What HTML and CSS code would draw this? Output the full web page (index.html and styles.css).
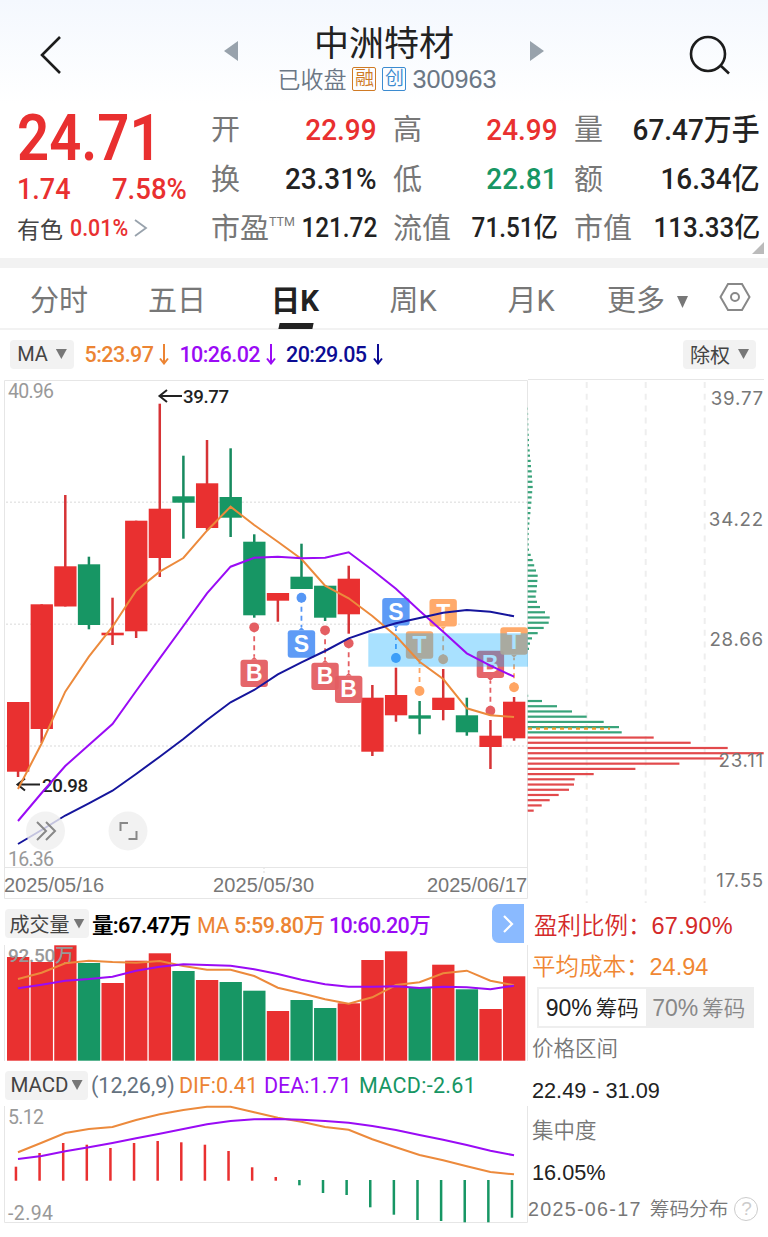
FILE: index.html
```
<!DOCTYPE html>
<html lang="zh-CN">
<head>
    <meta charset="UTF-8">
    <meta name="viewport" content="width=device-width, initial-scale=1.0">
    <title>中洲特材 300963</title>
    <link rel="stylesheet" href="styles.css">
</head>
<body>
    <!-- 顶部标题 -->
    <header class="header">
        <svg class="back" width="24" height="40" viewBox="0 0 24 40"><path d="M21 2 L3 20 L21 38"/></svg>
        <span class="arrow prev"></span>
        <div class="title">
            <h1>中洲特材</h1>
            <div class="subtitle">
                <span>已收盘</span>
                <span class="tag tag-rong">融</span>
                <span class="tag tag-chuang">创</span>
                <span class="code">300963</span>
            </div>
        </div>
        <span class="arrow next"></span>
        <svg class="search" width="44" height="44" viewBox="0 0 44 44"><circle cx="20" cy="20" r="17"/><path d="M32 31 L41 39.500"/></svg>
    </header>

    <!-- 行情数据 -->
    <section class="quote">
        <div class="price">
            <div class="last"><span class="num">24.71</span></div>
            <div class="change"><span class="num">1.74</span><span class="num">7.58%</span></div>
            <div class="sector">有色<span class="num red">0.01%</span><svg width="14" height="18" viewBox="0 0 14 18"><path d="M1 1 L12 9 L1 17"/></svg></div>
        </div>
        <div class="stats">
            <div class="stat"><label>开</label><b class="num red">22.99</b></div>
            <div class="stat"><label>高</label><b class="num red">24.99</b></div>
            <div class="stat"><label>量</label><b class="num">67.47<i>万手</i></b></div>
            <div class="stat"><label>换</label><b class="num">23.31%</b></div>
            <div class="stat"><label>低</label><b class="num green">22.81</b></div>
            <div class="stat"><label>额</label><b class="num">16.34<i>亿</i></b></div>
            <div class="stat small"><label>市盈<sup>TTM</sup></label><b class="num">121.72</b></div>
            <div class="stat small"><label>流值</label><b class="num">71.51<i>亿</i></b></div>
            <div class="stat small"><label>市值</label><b class="num">113.33<i>亿</i></b></div>
        </div>
        <span class="corner"></span>
    </section>

    <!-- 周期切换 -->
    <nav class="tabs">
        <a class="tab">分时</a>
        <a class="tab">五日</a>
        <a class="tab active">日K</a>
        <a class="tab">周K</a>
        <a class="tab">月K</a>
        <a class="tab more">更多<span class="caret"></span></a>
        <svg class="setting" width="32" height="30" viewBox="0 0 32 30"><path d="M9 2 H23 L30.500 15 L23 28 H9 L1.500 15 Z"/><circle cx="16" cy="15" r="4"/></svg>
    </nav>

    <!-- 均线 -->
    <div class="legend ma-legend">
        <span class="pill ma-pill">MA<span class="caret"></span></span>
        <span class="orange">5:23.97</span><svg class="down orange" width="10" height="22" viewBox="0 0 10 22"><path d="M5 1 V20 M1 15.500 L5 20.500 L9 15.500"/></svg>
        <span class="purple">10:26.02</span><svg class="down purple" width="10" height="22" viewBox="0 0 10 22"><path d="M5 1 V20 M1 15.500 L5 20.500 L9 15.500"/></svg>
        <span class="navy">20:29.05</span><svg class="down navy" width="10" height="22" viewBox="0 0 10 22"><path d="M5 1 V20 M1 15.500 L5 20.500 L9 15.500"/></svg>
        <span class="pill chuquan">除权<span class="caret"></span></span>
    </div>

    <!-- K线 + 筹码 -->
    <svg class="kline" width="768" height="525" viewBox="0 378 768 525">
        <g class="frame">
            <path d="M4.500 898.500 V380.500 H527.500 V898.500 M4.500 867.500 H527.500 M4.500 898.500 H527.500"/>
            <path d="M528 379.500 H764"/>
            <path class="dots" d="M6 502.300 H527 M6 624.300 H527 M6 746 H527 M264 867 V873"/>
            <path class="dashes" d="M586.700 382 V903 M645.700 382 V903 M704.700 382 V903"/>
        </g>
        <g class="scale">
            <text x="8" y="397.500" textLength="46">40.96</text>
            <text x="8" y="866" textLength="46">16.36</text>
        </g>
        <g class="dates">
            <text x="4" y="892" textLength="100">2025/05/16</text>
            <text x="213" y="892" textLength="101">2025/05/30</text>
            <text x="427" y="892" textLength="100">2025/06/17</text>
        </g>
        <g id="candles"></g>
        <g class="peak">
            <path d="M182 396 H159.500 M167 390 L159.500 396 L167 402"/>
            <text x="183" y="403.300" textLength="46">39.77</text>
            <path d="M40 784.500 H17.500 M25 778.500 L17.500 784.500 L25 790.500"/>
            <text x="42" y="791.500" textLength="46">20.98</text>
        </g>
        <g id="marks"></g>
        <rect class="band" x="368.300" y="633.300" width="159.700" height="33.400"/>
        <g id="lines"></g>
        <g id="chips"></g>
        <path class="avg-cost" d="M528 728.600 H610"/>
        <g class="chip-scale">
            <text x="764" y="405">39.77</text>
            <text x="764" y="525.500">34.22</text>
            <text x="764" y="646">28.66</text>
            <text x="764" y="766.500">23.11</text>
            <text x="764" y="887">17.55</text>
        </g>
        <g class="round">
            <circle cx="45.500" cy="831" r="19.500"/>
            <circle cx="128" cy="831" r="19.500"/>
            <path d="M37 822 L46 831 L37 840 M46 822 L55 831 L46 840"/>
            <path d="M120.500 831 V823 H128 M128.500 839 H136.500 V831"/>
        </g>
    </svg>

    <!-- 指标与筹码统计 -->
    <main class="bottom">
        <div class="indicators">
            <div class="legend vol-legend">
                <span class="pill">成交量<span class="caret"></span></span>
                <b>量:67.47万</b>
                <span class="orange"><em>MA</em> 5:59.80万</span>
                <span class="purple">10:60.20万</span>
                <span class="expand"><svg width="12" height="20" viewBox="0 0 12 20"><path d="M2 2 L10 10 L2 18"/></svg></span>
            </div>
            <svg id="volume" width="528" height="118" viewBox="0 944 528 118">
                <path class="side" d="M4.500 945 V1061 M527.500 945 V1061"/>
            </svg>
            <div class="legend macd-legend">
                <span class="pill">MACD<span class="caret"></span></span>
                <span class="slate">(12,26,9)</span>
                <span class="orange">DIF:0.41</span>
                <span class="purple">DEA:1.71</span>
                <span class="green">MACD:-2.61</span>
            </div>
            <svg id="macd" width="528" height="120" viewBox="0 1104 528 120">
                <path class="side" d="M4.500 1106 V1222.500 H527.500 V1106"/>
                <g class="scale">
                    <text x="8" y="1124" textLength="36">5.12</text>
                    <text x="8" y="1220" textLength="45">-2.94</text>
                </g>
            </svg>
        </div>
        <aside class="chip-info">
            <p class="profit">盈利比例：<span>67.90%</span></p>
            <p class="cost">平均成本：<span>24.94</span></p>
            <div class="switch"><span class="on">90%<i>筹码</i></span><span>70%<i>筹码</i></span></div>
            <p class="name">价格区间</p>
            <p class="value">22.49 - 31.09</p>
            <p class="name">集中度</p>
            <p class="value">16.05%</p>
            <p class="date"><span>2025-06-17</span> 筹码分布 <i class="help">?</i></p>
        </aside>
    </main>

    <script>
        const RED = '#e93030';
        const GREEN = '#179664';
        const STEP = 23.62;
        const cx = i => 18 + i * STEP;

        // [实体上沿, 实体下沿, 影线上沿, 影线下沿, 涨跌]
        const candles = [
            [702, 771.7, 702, 777, 1], [604.3, 729, 604.3, 743, 1], [566.3, 606.5, 495, 606.5, 1],
            [564.3, 625, 556.7, 629.3, 0], [632.7, 635.3, 597.7, 645, 1], [520.7, 631.3, 520.7, 638, 1],
            [508.7, 558, 403.7, 577, 1], [496.3, 502.7, 455.7, 538.7, 0], [483.3, 528, 440, 530, 1],
            [497, 517.7, 448.3, 537, 0], [541.7, 615.3, 534.3, 617.7, 0], [593, 600.7, 593, 621.7, 1],
            [576.7, 589, 543.7, 589, 0], [585.7, 617.7, 585.7, 621, 0], [578.7, 614.3, 565.7, 633.7, 1],
            [697.7, 751.7, 685, 756, 1], [695, 715.3, 667.7, 721.7, 1], [715.3, 718.7, 701, 734.3, 0],
            [697.7, 710, 669, 720.3, 1], [715.3, 732.3, 697.7, 735.7, 0], [735.7, 747, 720, 769, 1],
            [701.7, 738.3, 697, 740.7, 1]
        ];
        const ma5 = [789, 743.5, 691.7, 656.7, 626.7, 590.7, 571.7, 558, 530.7, 506.7, 525, 541.7, 559, 585.7, 598.3, 616, 636, 661.7, 679, 708.3, 715.3, 717];
        const ma10 = [821, 793, 766, 745, 724, 691, 658.3, 626, 593.3, 566.7, 557.7, 556.7, 558.3, 557.7, 552.3, 570, 588.7, 610.7, 631.7, 653.3, 665.7, 676.7];
        const ma20 = [844, 830, 815.5, 803.3, 790.7, 774, 756.7, 739, 720, 702.3, 690, 674.3, 662.3, 651, 638.3, 630.3, 623.3, 618, 612.7, 610, 611.7, 616.3];

        // 买卖标记: [第几根, 字母, 方块上沿, 圆点位置]
        const marks = [
            [10, 'B', 659.7, 627.3], [12, 'S', 630.3, 597.7], [13, 'B', 662.7, 630.3], [14, 'B', 675.7, 643.3],
            [16, 'S', 598, 658], [17, 'T', 631.3, 691], [18, 'T', 599, 659.3], [20, 'B', 650.7, 710.7], [21, 'T', 627.3, 687.3]
        ];
        const markColor = { B: '#e45e62', S: '#5596f5', T: '#ffa563' };

        // 筹码分布, 每行间隔 5.22
        const chips = [
            .3, .4, .5, .6, .7, 1, 1.3, 1.3, 2, 2.3, 3, 3.3, 4, 4.3, 4.7, 5, 4.5, 4, 3.7, 3, 2.7, 2, 1.7, 1.3, 1, 1, 1, 1.3,
            3, 5, 6.5, 8.3, 10, 9.7, 9.3, 8.7, 8, 9.3, 12.3, 17.3, 22, 21, 16, 10, 4.3, 2.3, 1.3, 0, 0, 0, 0, 0, 0, 0, 0, .5,
            14.3, 29.3, 44.3, 59, 76, 91.3, 94, 126, 163, 200, 236, 196, 151.7, 107.7, 66, 47, 46.3, 41.3, 31, 22, 14, 6
        ];

        const volume = [957, 962, 945.3, 963, 983, 960.7, 953.3, 971, 980, 982, 990.7, 1011, 1000, 1008, 1003.3, 960, 951.3, 987.7, 964.7, 989.3, 1009, 976.3];
        const vol5 = [979, 972.7, 963.3, 960.7, 962, 962.7, 961, 966, 969.7, 969.7, 976, 987.7, 993.3, 999.3, 1003.7, 997.3, 985, 982.3, 973.3, 970.7, 980.7, 985.3];
        const vol10 = [988.3, 984.7, 980.7, 979, 976.7, 970.7, 966.7, 964.3, 965, 965.7, 969.3, 974, 979.7, 984.3, 986.7, 986.7, 986.3, 988, 986.7, 987.3, 989.3, 985.7];

        const macd = [1166.7, 1153, 1143, 1144.7, 1148, 1143, 1141, 1142.3, 1144.7, 1151, 1167.3, 1177, 1185.3, 1193, 1195, 1207.3, 1214.7, 1220, 1221, 1222.3, 1222.3, 1217.7];
        const dif = [1152.3, 1142.7, 1133, 1129, 1127, 1120, 1114.3, 1110, 1106.7, 1106.7, 1112.3, 1117.7, 1121.7, 1127, 1129.7, 1139.3, 1147.3, 1155, 1160.3, 1166.3, 1172, 1174.3];
        const dea = [1159, 1156, 1151.3, 1147.3, 1143, 1138.3, 1133.7, 1129, 1124.3, 1121, 1119.3, 1119, 1119.7, 1121, 1122.7, 1126, 1130, 1135, 1139.7, 1145, 1150.7, 1155.3];

        function rect(x, y, w, h, fill) {
            return `<rect x="${x}" y="${y}" width="${w}" height="${h}" fill="${fill}"/>`;
        }

        function line(values, color) {
            const points = values.map((y, i) => cx(i) + ',' + y).join(' ');
            return `<polyline points="${points}" fill="none" stroke="${color}" stroke-width="2"/>`;
        }

        // K线
        document.getElementById('candles').innerHTML = candles.map(([top, bottom, high, low, up], i) =>
            rect(cx(i) - 1.2, high, 2.5, low - high, up ? '#d63336' : '#178a5f') +
            rect(cx(i) - 11, top, 22.3, bottom - top, up ? RED : GREEN)
        ).join('');

        // 标记: 圆点、虚线、字母方块
        document.getElementById('marks').innerHTML = marks.map(([i, letter, top, dot]) => {
            const x = cx(i);
            const c = markColor[letter];
            const below = dot < top;
            const edge = below ? top : top + 27.4;
            const tip = below ? edge - 3 : edge + 3;
            return `<g fill="${c}"><path d="M${x} ${dot} V${tip}" stroke="${c}" stroke-width="1.8" stroke-dasharray="5 4"/>
                <circle cx="${x}" cy="${dot}" r="4.900"/>
                <path d="M${x - 3} ${edge} L${x} ${tip} L${x + 3} ${edge} Z"/>
                <rect x="${x - 13.7}" y="${top}" width="27.400" height="27.400" rx="3" fill-opacity=".95"/>
                <text x="${x}" y="${top + 21.500}">${letter}</text></g>`;
        }).join('');

        document.getElementById('lines').innerHTML = line(ma5, '#ec8a3c') + line(ma10, '#9a0bf5') + line(ma20, '#15159c');

        document.getElementById('chips').innerHTML = chips.map((w, k) =>
            rect(527.7, 407.6 + k * 5.22, w, 2.2, k < 63 ? '#38a37a' : '#e24a4c')
        ).join('');

        // 成交量
        document.getElementById('volume').innerHTML += volume.map((y, i) =>
            rect(cx(i) - 11, y, 22.3, 1060.7 - y, candles[i][4] ? RED : GREEN)
        ).join('') + '<text class="vol-max" x="8" y="962" textLength="66">92.50万</text>' + line(vol5, '#ec8a3c') + line(vol10, '#9a0bf5');

        // MACD
        document.getElementById('macd').innerHTML += macd.map((y, i) =>
            y < 1180 ? rect(cx(i) - 3.3, y, 2.5, 1180.7 - y, RED) : rect(cx(i) - 3.3, 1180, 2.5, y - 1180, GREEN)
        ).join('') + line(dif, '#ec8a3c') + line(dea, '#9a0bf5');
    </script>
</body>
</html>
```
FILE: styles.css
```
* {
    box-sizing: border-box;
}

body {
    margin: 0;
    width: 768px;
    height: 1237px;
    overflow: hidden;
    background: #fff;
    color: #222;
    font-family: Roboto, "Noto Sans CJK SC", sans-serif;
}

h1, p {
    margin: 0;
    font-weight: 400;
}

i, em {
    font-style: normal;
}

svg {
    display: block;
    fill: none;
}

.red { color: #e93030; }
.green { color: #179664; }
.orange { color: #ec8433; }
.purple { color: #9a0bf5; }
.navy { color: #0c0c94; }
.slate { color: #64727f; }

/* 顶部 */
.header {
    display: flex;
    height: 104px;
    padding: 0 32px 0 39px;
    background: linear-gradient(#f4f8fe, #fff);
}

.back {
    margin-top: 35px;
    stroke: #1c1c1c;
    stroke-width: 2.600;
}

.arrow {
    width: 14px;
    height: 20px;
    margin-top: 41px;
    background: #98a2ac;
}

.prev {
    margin-left: 161px;
    clip-path: polygon(100% 0, 100% 100%, 0 50%);
}

.next {
    clip-path: polygon(0 0, 100% 50%, 0 100%);
}

.title {
    width: 292px;
    text-align: center;
}

.title h1 {
    margin-top: 24px;
    font-size: 35px;
    line-height: 42px;
}

.subtitle {
    display: flex;
    justify-content: center;
    align-items: center;
    gap: 6px;
    height: 26px;
    padding-left: 6px;
    color: #6b7785;
    font-size: 23px;
    font-weight: 350;
}

.subtitle span:first-child {
    margin-top: -3px;
}

.tag {
    width: 24px;
    height: 24px;
    border: 1px solid;
    border-radius: 2px;
    font-size: 19px;
    line-height: 21px;
}

.tag-rong {
    color: #cf7a24;
}

.tag-chuang {
    color: #3b8bd0;
}

.code {
    font-family: "Liberation Sans", sans-serif;
    font-size: 25.200px;
}

.search {
    margin: 34px 0 0 auto;
    stroke: #1c1c1c;
    stroke-width: 2.600;
    transform: translateX(-4px);
}

/* 行情 */
.quote {
    position: relative;
    display: flex;
    height: 164px;
    padding-left: 17px;
    border-bottom: 10px solid #f2f2f2;
}

.num {
    display: inline-block;
    transform: scaleX(.93);
    transform-origin: left;
}

.price {
    width: 194px;
    color: #e93030;
}

.last {
    height: 68px;
    font-size: 64px;
    font-weight: 600;
    line-height: 69px;
}

.last .num {
    transform: scaleX(.88);
}

.change {
    display: flex;
    justify-content: space-between;
    width: 170px;
    height: 34px;
    font-size: 29px;
    font-weight: 500;
    line-height: 34px;
}

.change .num:last-child {
    transform: scaleX(.95);
    transform-origin: right;
}

.sector {
    display: flex;
    align-items: center;
    height: 44px;
    color: #444;
    font-size: 23px;
}

.sector .num {
    width: 58px;
    margin: 0 6px 0 7px;
    font-weight: 500;
}

.sector svg {
    stroke: #98a2ac;
    stroke-width: 1.800;
}

.stats {
    display: grid;
    grid-template-columns: 166px 165px 186px;
    grid-template-rows: 50px 49px 50px;
    column-gap: 16px;
}

.stat {
    display: flex;
    justify-content: space-between;
    align-items: center;
    color: #777;
    white-space: nowrap;
}

.stat label {
    margin-top: -4px;
    font-size: 29px;
    font-weight: 380;
}

.stat sup {
    font-size: 12.500px;
    line-height: 0;
    vertical-align: 13px;
}

.stat i {
    line-height: 0;
}

.stat b {
    color: #222;
    font-size: 30px;
    font-weight: 500;
    transform-origin: right;
}

.stat b.red { color: #e93030; }
.stat b.green { color: #179664; }

.small b {
    margin-left: -20px;
    font-size: 27px;
    transform: scaleX(.9);
}

.stat:last-child b {
    transform: scaleX(.96);
}

.corner {
    position: absolute;
    right: 4px;
    bottom: 4px;
    width: 12px;
    height: 12px;
    background: #bbb;
    clip-path: polygon(100% 0, 100% 100%, 0 100%);
}

/* 周期 */
.tabs {
    display: flex;
    height: 62px;
    border-bottom: 2px solid #f2f2f2;
}

.tab {
    width: 118px;
    color: #777;
    font-size: 29px;
    font-weight: 380;
    line-height: 67px;
    text-align: center;
}

.active {
    position: relative;
    color: #222;
    font-size: 29.500px;
    font-weight: 700;
}

.active::after {
    content: "";
    position: absolute;
    left: 43px;
    bottom: 0;
    width: 34px;
    height: 6px;
    background: #222;
    transform: skewX(-12deg);
}

.tabs .active {
    height: 61px;
}

.more {
    width: 115px;
}

.caret {
    display: inline-block;
    width: 11px;
    height: 10px;
    background: #777;
    clip-path: polygon(0 0, 100% 0, 50% 100%);
}

.more .caret {
    height: 12px;
    margin-left: 12px;
    vertical-align: 3px;
}

.setting {
    margin: 14px 0 0 14px;
    stroke: #888;
    stroke-width: 2;
}

/* 指标文字 */
.legend {
    display: flex;
    align-items: center;
    font-size: 21.500px;
    font-weight: 500;
    white-space: nowrap;
}

.pill {
    display: flex;
    align-items: center;
    justify-content: center;
    gap: 4px;
    height: 29px;
    border-radius: 4px;
    background: #f2f2f2;
    color: #444;
    font-size: 20px;
    font-weight: 380;
}

.ma-legend {
    height: 48px;
    padding: 0 12px 0 10px;
    letter-spacing: -.55px;
}

.ma-pill, .chuquan {
    gap: 8px;
    letter-spacing: 0;
}

.ma-pill {
    width: 64px;
    margin-right: 10.500px;
}

.chuquan {
    width: 73px;
    margin-left: auto;
}

.down {
    margin: 0 10px 0 6px;
    stroke: currentColor;
    stroke-width: 2;
}

/* K线图 */
.frame, .side {
    stroke: #e6e6e6;
}

.dots {
    stroke-width: 1.500;
    stroke-dasharray: 2 2;
}

.dashes {
    stroke: #eee;
    stroke-width: 2;
    stroke-dasharray: 6 5.800;
}

.scale, .vol-max {
    fill: #999;
    font-size: 19.500px;
}

.vol-max {
    font-size: 19px;
    font-weight: 500;
}

.dates {
    fill: #777;
    font-family: "Liberation Sans", sans-serif;
    font-size: 20px;
}

.peak {
    stroke: #222;
    stroke-width: 2;
}

.peak text {
    fill: #222;
    stroke: none;
    font-size: 18.700px;
    font-weight: 500;
}

#marks text {
    fill: #fff;
    font-family: "Liberation Sans", sans-serif;
    font-size: 23px;
    font-weight: 700;
    text-anchor: middle;
}

.band {
    fill: #10abff;
    fill-opacity: .36;
}

.avg-cost {
    stroke: #f09a2a;
    stroke-width: 2.200;
    stroke-dasharray: 4 4;
}

.chip-scale {
    fill: #777;
    font-family: Inter, sans-serif;
    font-size: 18.700px;
    letter-spacing: .8px;
    text-anchor: end;
}

.round circle {
    fill: #efefef;
    fill-opacity: .8;
}

.round path {
    stroke: #888;
    stroke-width: 2;
}

/* 下半部分 */
.bottom {
    display: grid;
    grid-template-columns: 528px 240px;
}

.indicators .legend {
    padding-left: 5px;
}

.vol-legend {
    height: 41px;
}

.vol-legend .pill {
    width: 84px;
    margin-right: 3px;
}

.vol-legend b {
    width: 105px;
    color: #000;
    font-weight: 600;
    letter-spacing: -.7px;
}

.vol-legend .orange {
    width: 132px;
    letter-spacing: -.45px;
}

.vol-legend .purple {
    letter-spacing: -.6px;
}

.vol-legend em {
    font-weight: 400;
}

.expand {
    display: grid;
    place-items: center;
    width: 32px;
    height: 39px;
    margin-left: auto;
    margin-right: 4px;
    border-radius: 7px 0 0 7px;
    background: #8abaff;
}

.expand svg {
    stroke: #fff;
    stroke-width: 2.200;
}

.macd-legend {
    height: 42px;
    padding-top: 4px;
    font-weight: 450;
}

.macd-legend .pill {
    width: 83px;
    margin-right: 3px;
    gap: 3px;
    font-size: 20.500px;
}

.macd-legend .slate {
    width: 88px;
    font-weight: 400;
}

.macd-legend .orange {
    width: 85px;
}

.macd-legend .purple {
    width: 95px;
}

.macd-legend .green {
    letter-spacing: .3px;
}

.chip-info {
    padding-left: 4px;
    color: #222;
    font-family: "Liberation Sans", "Noto Sans CJK SC", sans-serif;
    font-weight: 350;
    white-space: nowrap;
}

.chip-info p {
    height: 41px;
    font-size: 21.500px;
    font-weight: 350;
    line-height: 43px;
}

.chip-info .profit {
    padding: 2px 0 0 2px;
    height: 43px;
    color: #d42a2a;
    font-size: 23.500px;
}

.profit span {
    letter-spacing: .3px;
}

.chip-info .cost {
    color: #f08733;
    font-size: 23.500px;
}

.switch {
    display: flex;
    width: 217px;
    height: 41px;
    margin: 0 0 0 5px;
    border: 2px solid #eee;
    background: #eee;
    color: #888;
    font-size: 23px;
    line-height: 38px;
}

.switch span {
    width: 107px;
    text-align: center;
}

.switch i {
    margin-left: 4px;
    font-size: 21.500px;
}

.switch .on {
    background: #fff;
    color: #222;
}

.chip-info .name {
    color: #777;
}

.chip-info .value {
    font-size: 21.700px;
}

.chip-info .date {
    display: flex;
    align-items: center;
    gap: 8px;
    height: 34px;
    margin-left: -4px;
    color: #777;
    font-size: 19.700px;
}

.date span {
    letter-spacing: 1.300px;
}

.help {
    width: 24px;
    height: 24px;
    margin-left: -2px;
    border: 1.500px solid #ccc;
    border-radius: 50%;
    color: #ccc;
    font-size: 19px;
    line-height: 22px;
    text-align: center;
}
```
